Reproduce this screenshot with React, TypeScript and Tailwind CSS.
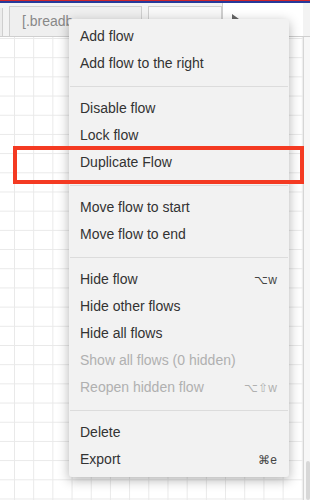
import React from "react";

type Entry =
  | { kind: "item"; label: string; shortcut?: string; disabled?: boolean }
  | { kind: "sep" };

const entries: Entry[] = [
  { kind: "item", label: "Add flow" },
  { kind: "item", label: "Add flow to the right" },
  { kind: "sep" },
  { kind: "item", label: "Disable flow" },
  { kind: "item", label: "Lock flow" },
  { kind: "item", label: "Duplicate Flow" },
  { kind: "sep" },
  { kind: "item", label: "Move flow to start" },
  { kind: "item", label: "Move flow to end" },
  { kind: "sep" },
  { kind: "item", label: "Hide flow", shortcut: "⌥w" },
  { kind: "item", label: "Hide other flows" },
  { kind: "item", label: "Hide all flows" },
  { kind: "item", label: "Show all flows (0 hidden)", disabled: true },
  { kind: "item", label: "Reopen hidden flow", shortcut: "⌥⇧w", disabled: true },
  { kind: "sep" },
  { kind: "item", label: "Delete" },
  { kind: "item", label: "Export", shortcut: "⌘e" },
];

export default function App() {
  return (
    <div className="relative h-[500px] w-[310px] overflow-hidden bg-white font-['Liberation_Sans',Arial,sans-serif]">
      {/* top accent */}
      <div className="h-px bg-[#d0262c]" />
      <div className="h-[2px] bg-[#27399a]" />

      {/* tab strip */}
      <div className="flex h-[34px] items-end border-b border-[#cfcfcf] bg-[#f3f3f3] pr-[7px]">
        <div className="h-[28px] w-[3px] border-r border-[#cfcfcf] bg-[#ececec]" />
        <div className="ml-[6px] flex h-[30px] w-[133px] items-center border border-b-0 border-[#cfcfcf] bg-[#efefef] px-[12px] text-[14px] text-[#888]">
          [.breadb
        </div>
        <div className="ml-[6px] h-[30px] w-[74px] border border-b-0 border-[#cfcfcf] bg-[#f8f8f8]" />
        <div className="flex h-[33px] flex-1 items-center border-l border-[#cfcfcf] bg-white pl-[8px]">
          <svg width="8" height="10" viewBox="0 0 8 10" className="mt-[-4px]">
            <path d="M1 1v8l2.5-2.5L5 9l1-.5-1.5-2.5H8z" fill="#666" />
          </svg>
        </div>
      </div>

      {/* canvas */}
      <div className="flex h-[463px]">
        <div className="flex-1 bg-white bg-[linear-gradient(to_right,#e9e9e9_1px,transparent_1px),linear-gradient(to_bottom,#e9e9e9_1px,transparent_1px)] bg-[size:19.2px_19.2px] bg-[position:14px_1px]" />
        <div className="flex w-[7px] border-l border-[#d6d6d6] bg-[#f7f7f7]">
          <div className="mt-[424px] ml-[2px] w-[3px] flex-1 rounded-sm bg-[#d8d8d8]" />
        </div>
      </div>

      {/* context menu */}
      <div className="absolute left-[69px] top-[19px] w-[220px] rounded-[3px] bg-[#f2f2f2] py-[4px] shadow-[0_3px_12px_rgba(0,0,0,0.3)]">
        {entries.map((e, i) =>
          e.kind === "sep" ? (
            <div key={i} className="flex h-[18px] items-center px-px">
              <div className="h-px w-full bg-[#dcdcdc]" />
            </div>
          ) : (
            <div
              key={i}
              className={
                "flex h-[27px] items-center justify-between pl-[11px] pr-[12px] text-[14px] " +
                (e.disabled ? "text-[#b0b0b0]" : "text-[#333]")
              }
            >
              <span>{e.label}</span>
              {e.shortcut && (
                <span className={"text-[12px] " + (e.disabled ? "text-[#b0b0b0]" : "text-[#444]")}>
                  {e.shortcut}
                </span>
              )}
            </div>
          )
        )}
      </div>

      {/* highlight box */}
      <div className="absolute left-[13px] top-[146px] h-[38px] w-[291px] border-4 border-[#f43a22]" />
    </div>
  );
}
